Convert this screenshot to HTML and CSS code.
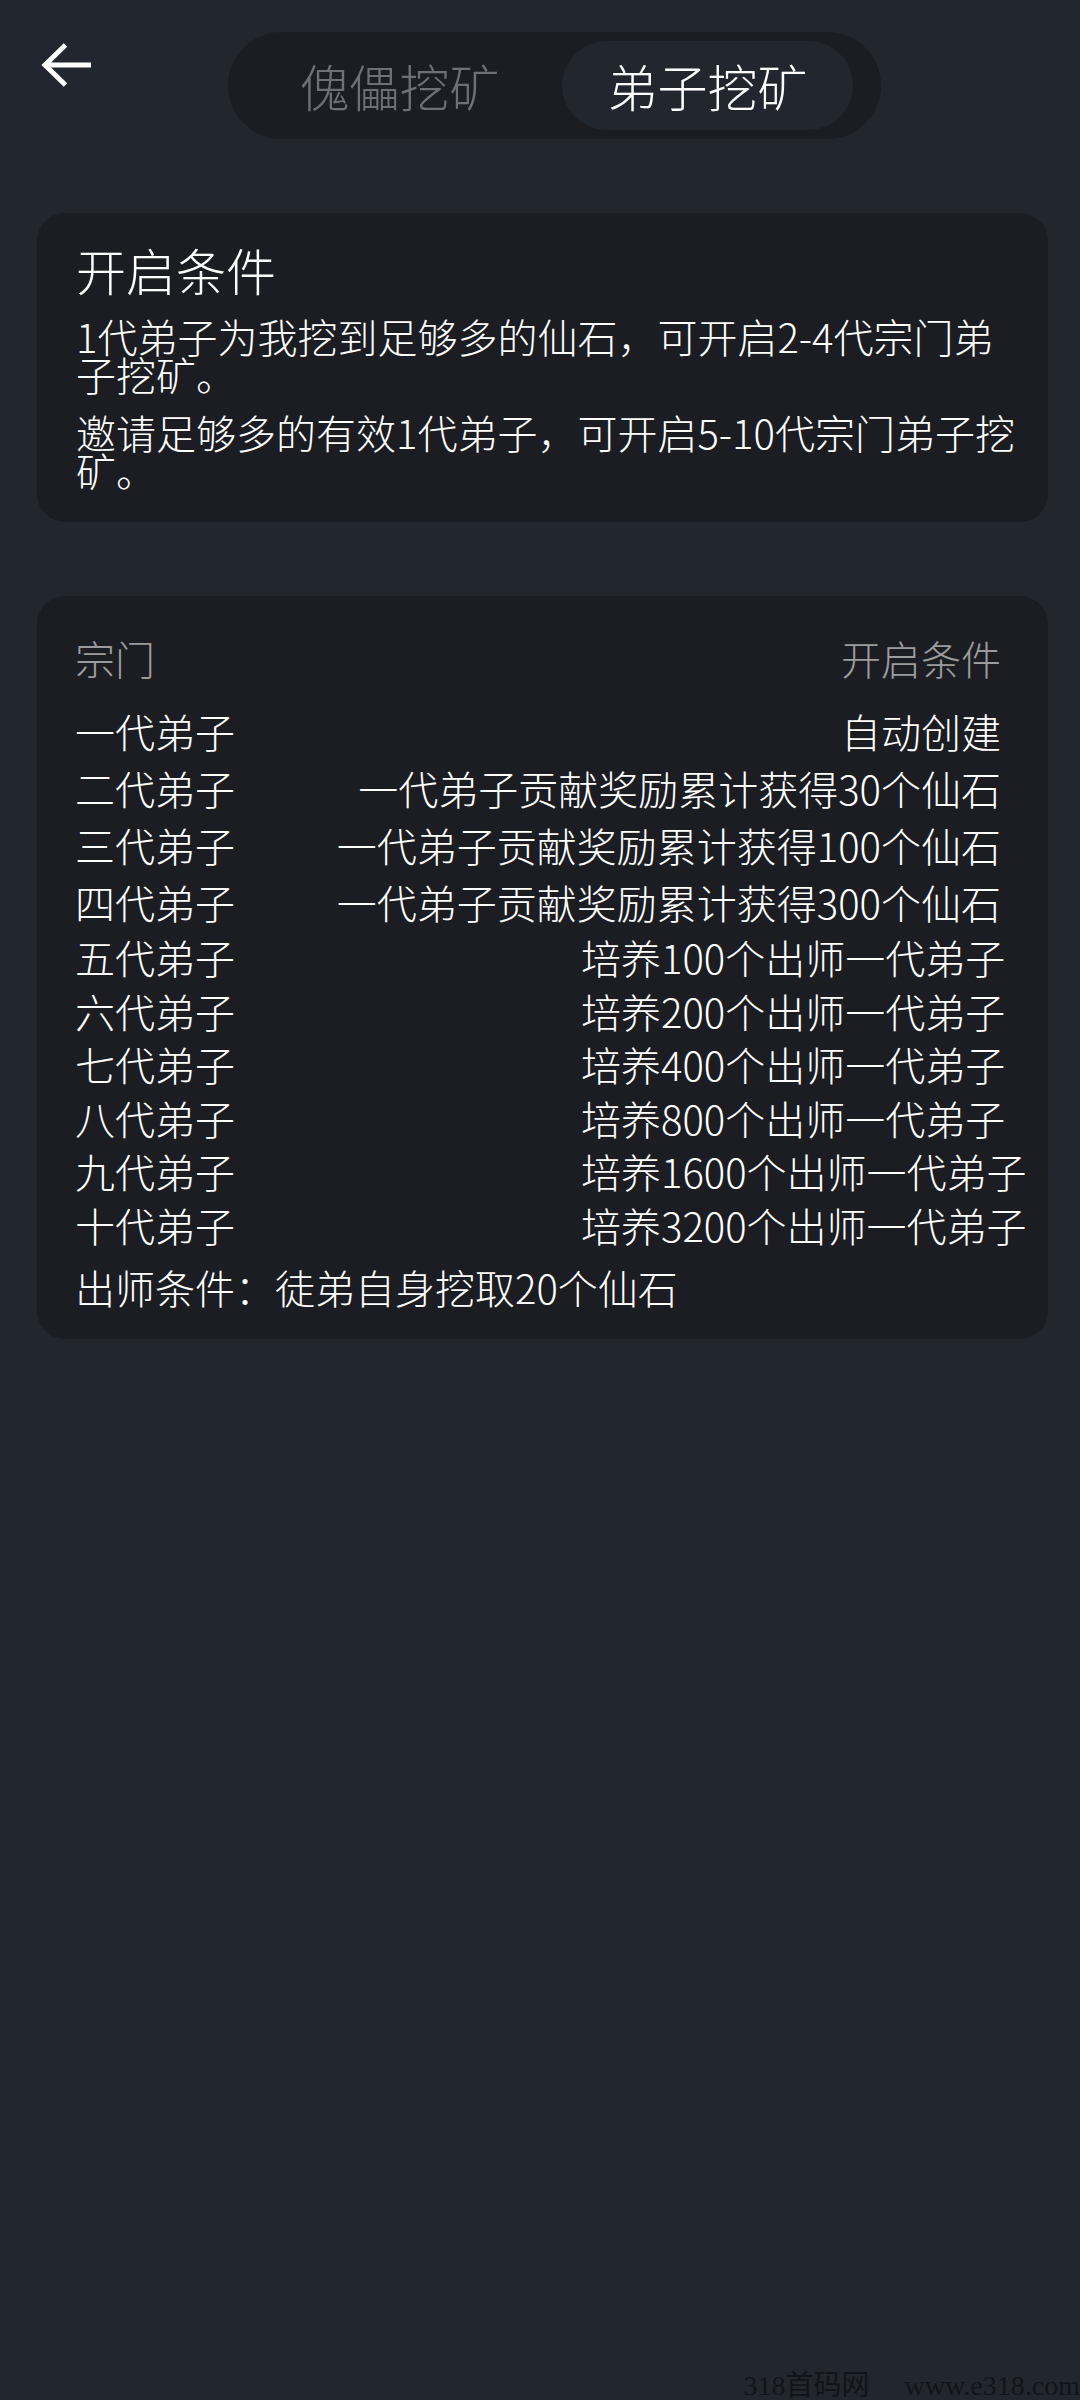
FILE: index.html
```html
<!DOCTYPE html>
<html lang="zh-CN">
<head>
<meta charset="utf-8">
<title>弟子挖矿</title>
<link rel="stylesheet" href="styles.css">
</head>
<body>
<div class="page">
  <header class="topbar">
    <svg class="back" width="54" height="46" viewBox="0 0 54 46" aria-label="返回">
      <path d="M52 23 H6 M26.5 3 L6 23 L26.5 43" fill="none" stroke="#ffffff" stroke-width="5" stroke-linecap="butt" stroke-linejoin="miter"/>
    </svg>
    <div class="seg">
      <div class="seg-tab">傀儡挖矿</div>
      <div class="seg-tab active">弟子挖矿</div>
    </div>
  </header>

  <section class="card intro">
    <h2 class="intro-title">开启条件</h2>
    <p class="intro-text">1代弟子为我挖到足够多的仙石，可开启2-4代宗门弟子挖矿。</p>
    <p class="intro-text">邀请足够多的有效1代弟子，可开启5-10代宗门弟子挖矿。</p>
  </section>

  <section class="card levels">
    <div class="thead"><span>宗门</span><span>开启条件</span></div>
    <div class="group group-a">
      <div class="row"><span class="name">一代弟子</span><span class="cond">自动创建</span></div>
      <div class="row"><span class="name">二代弟子</span><span class="cond">一代弟子贡献奖励累计获得30个仙石</span></div>
      <div class="row"><span class="name">三代弟子</span><span class="cond">一代弟子贡献奖励累计获得100个仙石</span></div>
      <div class="row"><span class="name">四代弟子</span><span class="cond">一代弟子贡献奖励累计获得300个仙石</span></div>
    </div>
    <div class="group group-b">
      <div class="row"><span class="name">五代弟子</span><span class="cond">培养100个出师一代弟子</span></div>
      <div class="row"><span class="name">六代弟子</span><span class="cond">培养200个出师一代弟子</span></div>
      <div class="row"><span class="name">七代弟子</span><span class="cond">培养400个出师一代弟子</span></div>
      <div class="row"><span class="name">八代弟子</span><span class="cond">培养800个出师一代弟子</span></div>
      <div class="row"><span class="name">九代弟子</span><span class="cond">培养1600个出师一代弟子</span></div>
      <div class="row"><span class="name">十代弟子</span><span class="cond">培养3200个出师一代弟子</span></div>
    </div>
    <p class="note">出师条件：徒弟自身挖取20个仙石</p>
  </section>

  <div class="watermark">318首码网　 www.e318.com</div>
</div>
</body>
</html>
```

FILE: styles.css
```css
html, body {
  margin: 0;
  padding: 0;
  background: #22262f;
}

body {
  font-family: "Noto Sans CJK SC", sans-serif;
  font-weight: 300;
  color: #ffffff;
}

.page {
  position: relative;
  min-height: 2400px;
  overflow: hidden;
}

/* top bar */
.topbar {
  display: flex;
  align-items: flex-start;
  padding-top: 32px;
}

.back {
  display: block;
  flex: none;
  margin: 10px 0 0 39px;
}

.seg {
  display: flex;
  align-items: center;
  gap: 17px;
  box-sizing: border-box;
  width: 653px;
  height: 107px;
  margin-left: 135px;
  padding: 0 28px 0 26px;
  border-radius: 54px;
  background: #1b1d22;
}

.seg-tab {
  width: 291px;
  height: 89px;
  border-radius: 45px;
  font-size: 50px;
  line-height: 89px;
  text-align: center;
  color: #6e7075;
}

.seg-tab.active {
  background: #22262f;
  color: #ffffff;
}

/* cards */
.card {
  box-sizing: border-box;
  width: 1011px;
  margin: 74px 0 0 37px;
  border-radius: 28px;
  background: #1b1d22;
}

.intro {
  padding: 26px 24px 33px 39px;
}

.intro-title {
  margin: 0 0 18px;
  font-size: 50px;
  font-weight: 300;
  line-height: 60px;
}

.intro-text {
  margin: 0;
  font-size: 40px;
  line-height: 38px;
}

.intro-text + .intro-text {
  margin-top: 20px;
}

.levels {
  padding: 37px 47px 27px 38px;
  font-size: 40px;
}

.thead {
  display: flex;
  justify-content: space-between;
  margin-bottom: 20px;
  line-height: 50px;
  color: #9c9c9e;
}

.row {
  display: flex;
  white-space: nowrap;
}

.name {
  flex: none;
}

.group-a .row {
  line-height: 57px;
}

.group-a .cond {
  margin-left: auto;
}

.group-b .row {
  line-height: 53.5px;
}

.group-b .name {
  width: 506px;
}

.note {
  margin: 9.5px 0 0;
  line-height: 50px;
}

/* watermark overlay */
.watermark {
  position: absolute;
  right: 0;
  bottom: 0;
  font-family: "Liberation Serif", "Noto Sans CJK SC", serif;
  font-weight: 400;
  font-size: 28px;
  line-height: 28px;
  color: #121419;
  white-space: pre;
}
```
